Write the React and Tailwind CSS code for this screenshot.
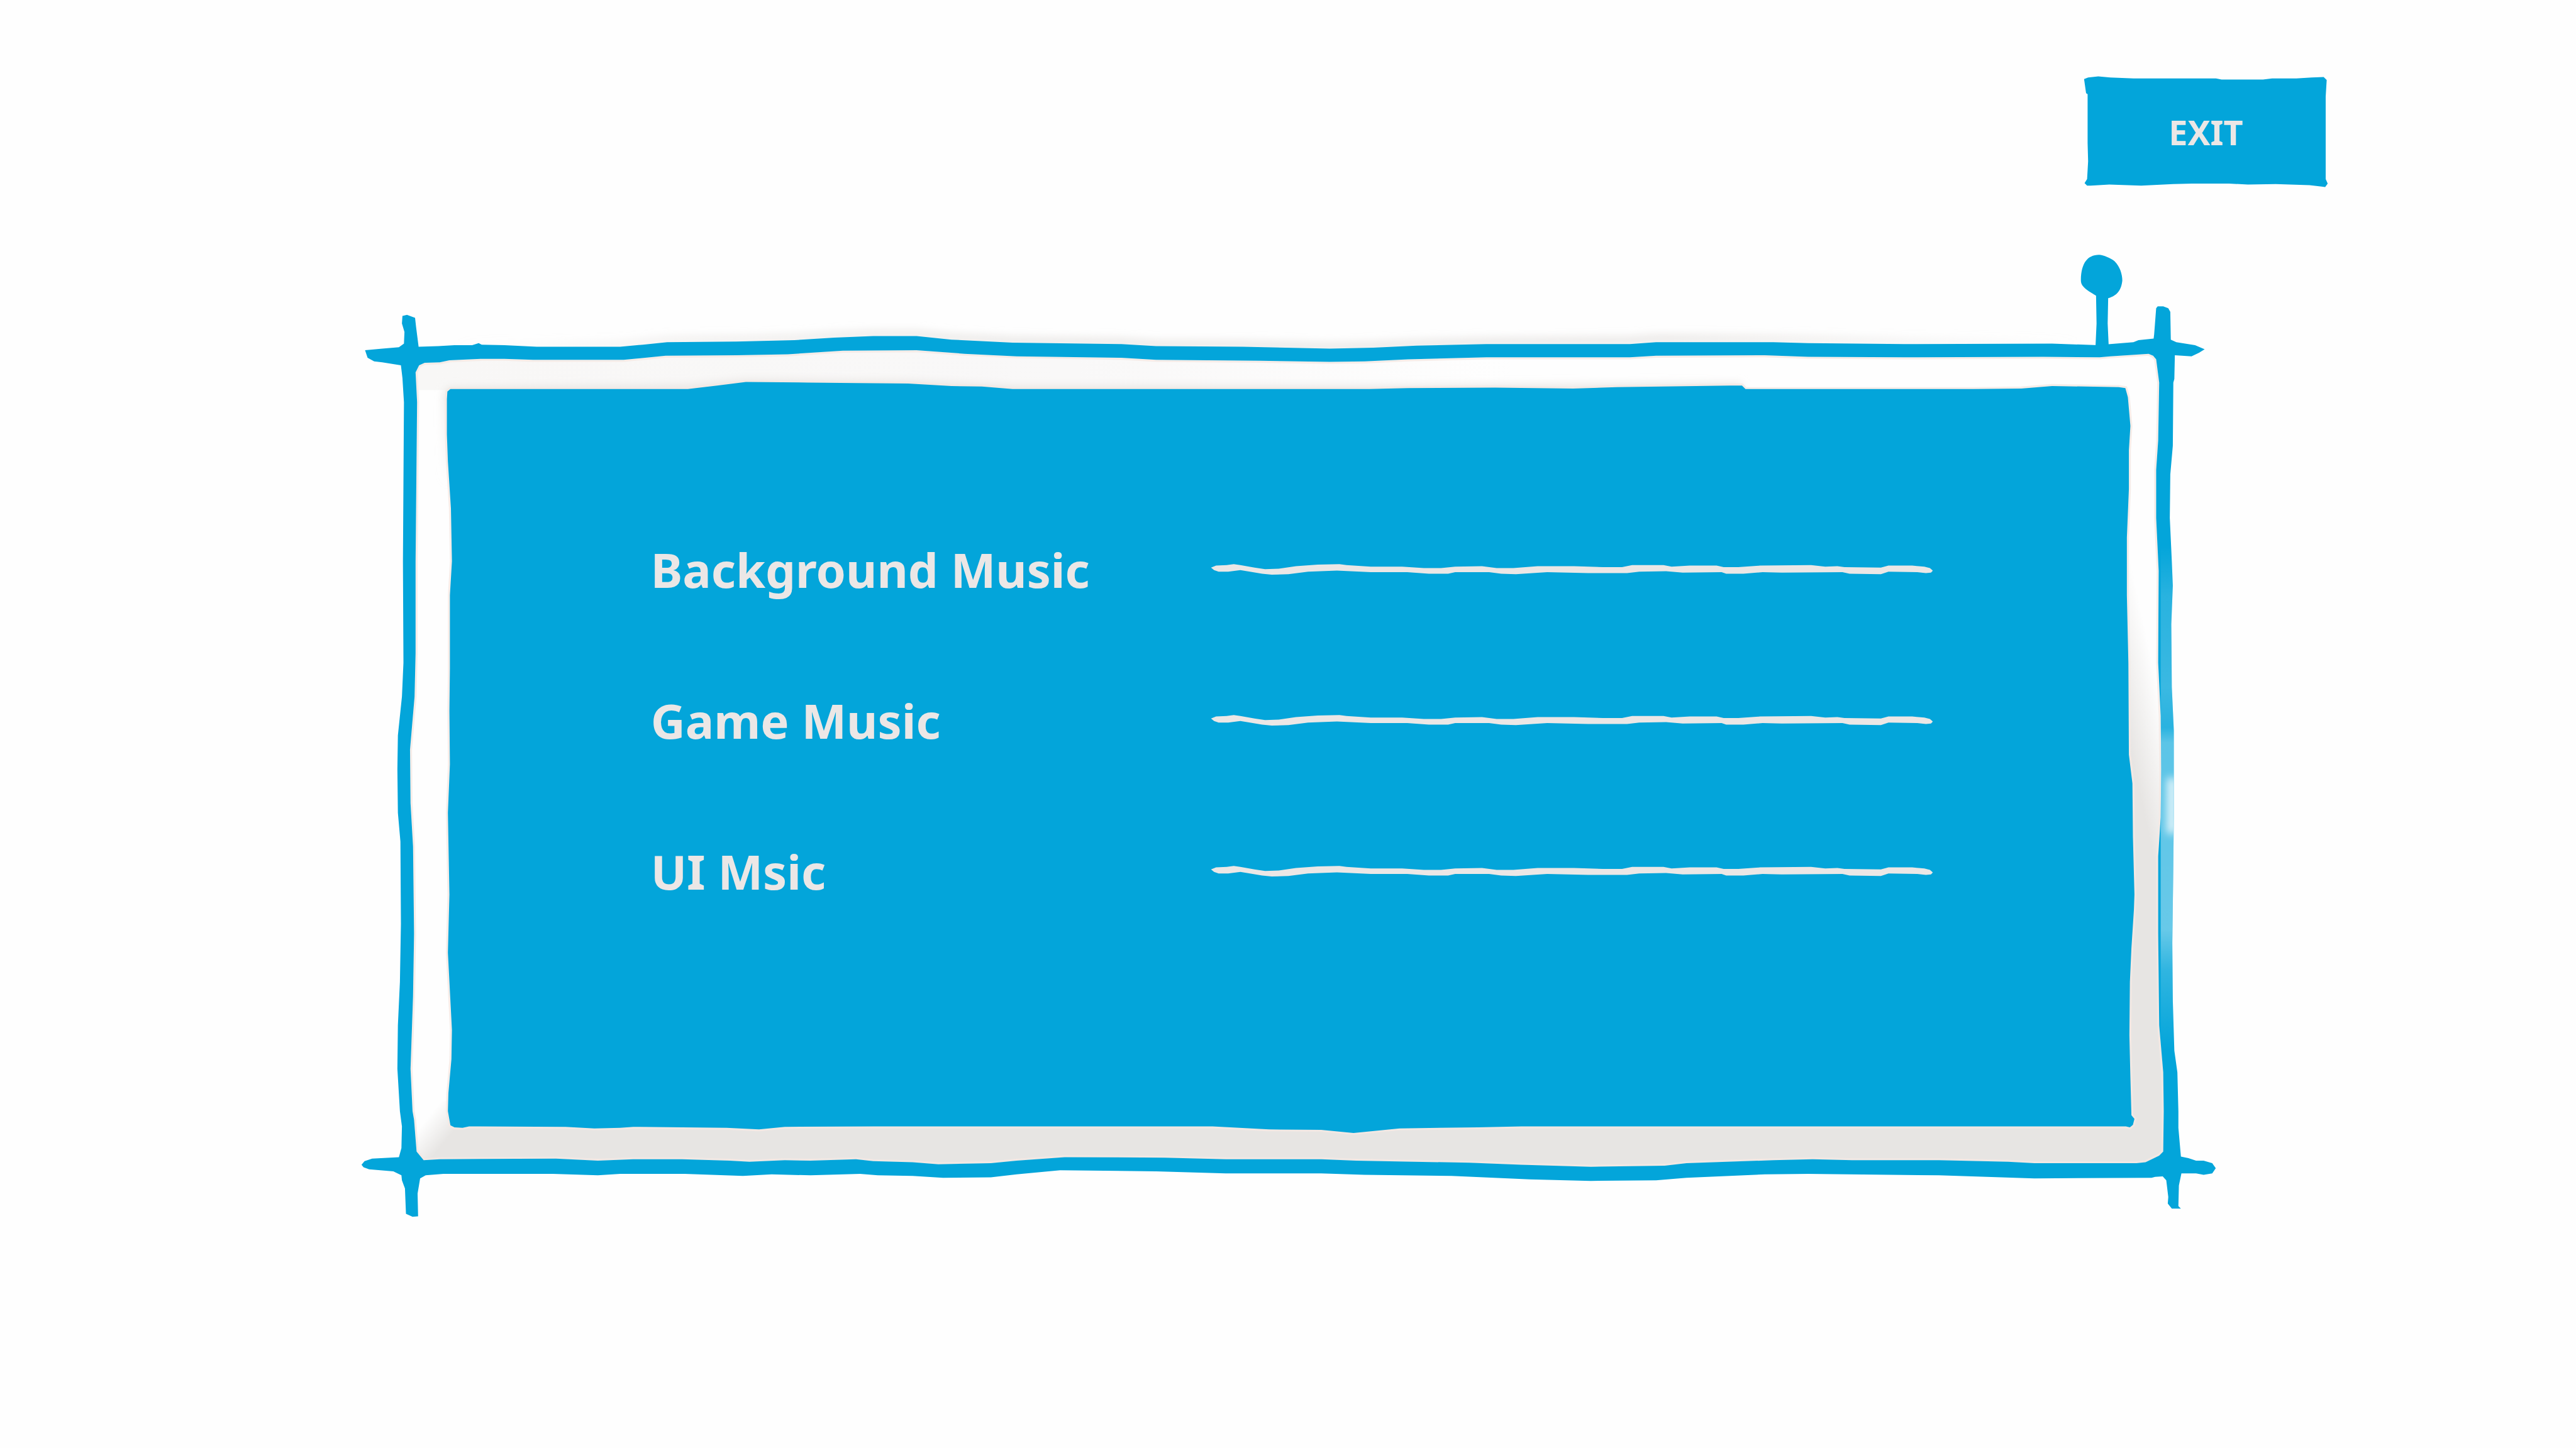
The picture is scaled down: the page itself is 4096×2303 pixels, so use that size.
const BLUE = "#03a5da";

const FRAME_OUTER =
  "M723,693 757,690 790,687 800,680 801,657 796,640 797,625 806,623 822,629 824,647 829,686 868,685 900,683 935,683 948,679 954,682 999,683 1063,686 1228,686 1273,682 1321,677 1458,676 1573,673 1652,668 1729,665 1815,665 1884,672 2005,678 2220,681 2289,685 2461,686 2633,690 2719,688 2805,684 2943,681 3227,681 3279,677 3511,677 3580,679 3770,681 4063,680 4154,683 4178,681 4224,677 4234,673 4264,670 4265,662 4269,610 4272,606 4283,606 4293,610 4297,617 4298,672 4309,677 4346,683 4365,691 4354,698 4339,705 4306,703 4305,750 4303,757 4302,882 4297,939 4296,1025 4300,1111 4302,1159 4299,1236 4300,1360 4304,1446 4304,1609 4303,1714 4301,1867 4302,1982 4305,2080 4311,2123 4313,2200 4313,2233 4318,2290 4333,2293 4348,2298 4363,2298 4380,2303 4387,2313 4380,2323 4363,2326 4348,2323 4319,2323 4314,2347 4313,2388 4318,2393 4300,2393 4292,2383 4293,2370 4289,2337 4282,2329 4267,2330 4260,2332 4028,2333 3839,2327 3580,2324 3494,2325 3339,2332 3279,2337 3150,2338 3029,2335 2874,2328 2702,2326 2616,2323 2427,2323 2289,2319 2099,2317 2013,2325 1962,2331 1867,2332 1807,2328 1738,2327 1703,2324 1605,2327 1528,2325 1471,2328 1356,2324 1228,2324 1184,2327 1095,2324 878,2324 843,2327 832,2333 827,2363 828,2408 817,2409 804,2403 802,2353 796,2337 795,2327 779,2319 731,2315 720,2311 716,2306 722,2299 737,2294 790,2291 795,2273 796,2230 792,2200 787,2116 788,2030 792,1944 794,1829 793,1666 788,1609 787,1523 788,1456 796,1379 799,1312 798,1111 800,796 797,748 794,723 757,717 741,715 728,708Z";

const FRAME_INNER =
  "M823,737 830,723 841,718 871,717 890,713 954,710 999,710 1056,712 1235,712 1318,704 1458,703 1560,701 1669,694 1815,693 1910,700 2013,705 2220,708 2289,712 2495,714 2633,716 2702,715 2788,711 2943,707 3227,707 3279,704 3494,703 3580,706 3770,707 4045,706 4157,707 4178,705 4254,700 4263,704 4269,711 4272,734 4275,757 4273,872 4269,930 4269,1025 4274,1130 4273,1312 4278,1417 4279,1523 4278,1618 4273,1695 4273,1848 4275,2030 4283,2123 4284,2200 4283,2280 4275,2288 4248,2301 4230,2303 4028,2303 3976,2300 3839,2297 3667,2297 3589,2295 3511,2297 3339,2303 3296,2308 3150,2310 3012,2306 2909,2302 2685,2298 2616,2295 2427,2295 2306,2292 2108,2291 2013,2298 1962,2303 1858,2305 1807,2301 1729,2299 1695,2295 1605,2298 1554,2297 1484,2300 1445,2298 1350,2295 1254,2295 1184,2298 1101,2294 871,2295 839,2297 825,2280 820,2217 817,2200 813,2116 818,1972 820,1848 818,1676 813,1590 812,1484 821,1379 823,1293 823,1111 826,796Z";

const BOARD =
  "M892,770 886,775 885,790 885,860 887,913 893,1006 895,1111 891,1178 891,1322 890,1408 891,1513 887,1609 890,1771 887,1886 895,2039 894,2097 888,2164 887,2200 892,2228 900,2232 916,2233 929,2230 1120,2231 1177,2234 1228,2233 1254,2231 1439,2233 1503,2236 1554,2231 1729,2230 2401,2230 2513,2236 2616,2237 2680,2243 2771,2234 2926,2232 3012,2230 4209,2230 4217,2232 4223,2227 4226,2215 4220,2208 4218,2133 4216,2050 4217,1944 4220,1877 4225,1800 4226,1771 4223,1657 4222,1551 4215,1494 4214,1312 4211,1178 4211,1064 4215,968 4215,891 4218,843 4213,786 4208,768 4195,766 4063,764 4002,769 3908,770 3456,770 3449,763 3425,763 3201,766 3115,769 2960,767 2788,768 2711,770 2005,770 1944,765 1884,764 1798,759 1695,758 1600,757 1477,756 1420,763 1362,770Z";

const TOP_EDGE =
  "M900,684 1063,685 1228,682 1321,673 1458,672 1573,669 1652,664 1729,661 1815,661 1884,668 2005,674 2220,677 2289,681 2461,682 2633,686 2719,684 2805,680 2943,676 3227,674 3279,670 3511,671 3770,676 4120,680";

const LINE =
  "M2,11 12,7 33,6 47,4 60,6 88,11 109,14 136,13 170,8 213,5 256,4 270,6 318,9 380,9 423,12 457,12 485,9 538,8 567,12 600,12 648,8 720,8 777,10 815,10 835,6 897,6 913,9 949,7 1002,7 1016,10 1045,10 1088,7 1189,6 1217,9 1241,8 1255,10 1327,11 1342,7 1389,7 1413,9 1424,12 1430,17 1426,21 1416,22 1399,20 1342,19 1327,24 1265,23 1251,20 1131,21 1093,20 1055,23 1021,23 1012,20 935,21 902,18 849,19 825,22 748,22 667,20 605,24 576,23 552,20 485,20 471,23 433,23 390,20 318,20 251,17 194,19 155,24 122,25 103,23 79,19 60,16 36,19 17,19 8,16Z";

const PLATE =
  "M1,7 9,4 29,2 53,4 99,6 214,6 262,6 273,8 355,8 373,6 421,6 451,4 475,3 481,9 479,42 479,134 479,205 483,214 478,221 471,220 447,217 380,215 325,216 288,214 214,214 177,215 114,218 51,216 14,218 7,218 2,213 7,205 9,170 8,134 8,37 5,35Z";

function Frame() {
  return (
    <svg
      viewBox="700 500 3700 1920"
      preserveAspectRatio="none"
      aria-hidden="true"
      className="col-start-1 row-start-1 h-full w-full"
    >
      <defs>
        <clipPath id="mat">
          <path d={FRAME_INNER} />
        </clipPath>
        <clipPath id="bars">
          <path d={FRAME_OUTER + FRAME_INNER} clipRule="evenodd" />
        </clipPath>
        <linearGradient id="rightShade" gradientUnits="userSpaceOnUse" x1="4268" y1="1340" x2="4190" y2="1357">
          <stop offset="0" stopColor="#e7e5e3" stopOpacity="0" />
          <stop offset="1" stopColor="#e7e5e3" />
        </linearGradient>
        <linearGradient id="bottomShade" gradientUnits="userSpaceOnUse" x1="846" y1="2214" x2="890" y2="2250">
          <stop offset="0" stopColor="#e7e5e3" stopOpacity="0" />
          <stop offset="1" stopColor="#e7e5e3" />
        </linearGradient>
        <linearGradient id="topShade" gradientUnits="userSpaceOnUse" x1="830" y1="0" x2="3000" y2="0">
          <stop offset="0" stopColor="#f8f7f6" />
          <stop offset="0.6" stopColor="#f9f8f8" />
          <stop offset="1" stopColor="#f9f8f8" stopOpacity="0" />
        </linearGradient>
        <linearGradient id="edgeShade" gradientUnits="userSpaceOnUse" x1="900" y1="0" x2="4120" y2="0">
          <stop offset="0" stopColor="#dfdbd8" stopOpacity="0" />
          <stop offset="0.15" stopColor="#dfdbd8" stopOpacity="0.4" />
          <stop offset="0.35" stopColor="#dfdbd8" stopOpacity="0.6" />
          <stop offset="0.75" stopColor="#dfdbd8" stopOpacity="0.6" />
          <stop offset="1" stopColor="#dfdbd8" stopOpacity="0" />
        </linearGradient>
        <linearGradient id="cornerShade" gradientUnits="userSpaceOnUse" x1="0" y1="790" x2="0" y2="960">
          <stop offset="0" stopColor="#e4e0dd" stopOpacity="0.6" />
          <stop offset="1" stopColor="#e4e0dd" stopOpacity="0" />
        </linearGradient>
        <linearGradient id="wear" x1="0" y1="0" x2="0" y2="1">
          <stop offset="0" stopColor="#fff" stopOpacity="0" />
          <stop offset="0.1" stopColor="#fff" stopOpacity="0.15" />
          <stop offset="0.28" stopColor="#fff" stopOpacity="0.22" />
          <stop offset="0.36" stopColor="#fff" stopOpacity="0.15" />
          <stop offset="0.39" stopColor="#fff" stopOpacity="0.35" />
          <stop offset="0.76" stopColor="#fff" stopOpacity="0.4" />
          <stop offset="0.84" stopColor="#fff" stopOpacity="0.18" />
          <stop offset="1" stopColor="#fff" stopOpacity="0" />
        </linearGradient>
        <filter id="soft" filterUnits="userSpaceOnUse" x="700" y="500" width="3700" height="1920">
          <feGaussianBlur stdDeviation="8" />
        </filter>
      </defs>

      <path d={TOP_EDGE} fill="none" stroke="url(#edgeShade)" strokeWidth="16" filter="url(#soft)" />

      <g clipPath="url(#mat)">
        <path d={FRAME_INNER} fill="#fefefe" />
        <rect x="820" y="690" width="2180" height="82" fill="url(#topShade)" />
        <path d="M886,775 L886,960" fill="none" stroke="url(#cornerShade)" strokeWidth="18" filter="url(#soft)" />
        <path
          d="M886,775 L1362,770 L1477,760 L1798,762 L2005,772 L2711,772 L3449,766"
          fill="none"
          stroke="#e4e0dd"
          strokeOpacity="0.7"
          strokeWidth="18"
          filter="url(#soft)"
        />
        <rect x="4200" y="1000" width="90" height="1230" fill="url(#rightShade)" />
        <rect x="810" y="2180" width="3480" height="140" fill="url(#bottomShade)" />
        <path d={BOARD} fill="none" stroke="#f4e8e3" strokeOpacity="0.8" strokeWidth="8" />
        <path d={FRAME_INNER} fill="none" stroke="#f4e8e3" strokeOpacity="0.8" strokeWidth="8" />
      </g>

      <path d={BOARD} fill={BLUE} />
      <path d={FRAME_OUTER + FRAME_INNER} fill={BLUE} fillRule="evenodd" />
      <g clipPath="url(#bars)">
        <rect x="4278" y="1080" width="30" height="1000" fill="url(#wear)" />
        <rect x="4290" y="1540" width="20" height="110" fill="#fff" fillOpacity="0.8" filter="url(#soft)" />
      </g>
      <path
        fill={BLUE}
        d="M4120,552 C4121,522 4132,504 4156,504 C4164,504 4180,511 4187,517 C4197,527 4202,542 4202,555 C4200,572 4194,584 4174,590 L4173,640 L4175,684 L4149,684 L4151,640 L4150,585 C4142,580 4130,574 4124,566 C4120,561 4120,557 4120,552Z"
      />
    </svg>
  );
}

function VolumeSlider({ id, label }) {
  return (
    <div className="grid w-full items-center">
      <svg
        viewBox="0 0 1430 30"
        preserveAspectRatio="none"
        aria-hidden="true"
        className="col-start-1 row-start-1 h-6 w-full"
      >
        <path d={LINE} fill="#ebe7e6" />
      </svg>
      <input
        id={id}
        type="range"
        aria-label={label}
        className="col-start-1 row-start-1 h-6 w-full cursor-pointer appearance-none bg-transparent [&::-webkit-slider-thumb]:appearance-none"
      />
    </div>
  );
}

const SETTINGS = [
  { id: "background-music", label: "Background Music" },
  { id: "game-music", label: "Game Music" },
  { id: "ui-music", label: "UI Msic" },
];

export default function App() {
  return (
    <div className="min-h-screen w-full bg-[#fefefe] pt-30 font-['Noto_Sans','Open_Sans',sans-serif] font-bold text-[#ebe7e6]">
      <header className="flex justify-end pr-[9.62%]">
        <button type="button" className="grid h-45 w-[389px] cursor-pointer place-items-center">
          <svg
            viewBox="0 0 484 224"
            preserveAspectRatio="none"
            aria-hidden="true"
            className="col-start-1 row-start-1 h-full w-full"
          >
            <path d={PLATE} fill={BLUE} />
          </svg>
          <span className="col-start-1 row-start-1 text-[54px] leading-none">EXIT</span>
        </button>
      </header>

      <main className="mx-auto mt-[102px] grid aspect-[3700/1920] w-[72.55%]">
        <Frame />
        <form className="col-start-1 row-start-1 pt-[384px] pr-[15.5%] pl-[15.9%]">
          {SETTINGS.map(({ id, label }) => (
            <div key={id} className="grid h-60 grid-cols-[1106fr_1430fr] items-center">
              <label htmlFor={id} className="text-[76px] leading-none">
                {label}
              </label>
              <VolumeSlider id={id} label={label} />
            </div>
          ))}
        </form>
      </main>
    </div>
  );
}
